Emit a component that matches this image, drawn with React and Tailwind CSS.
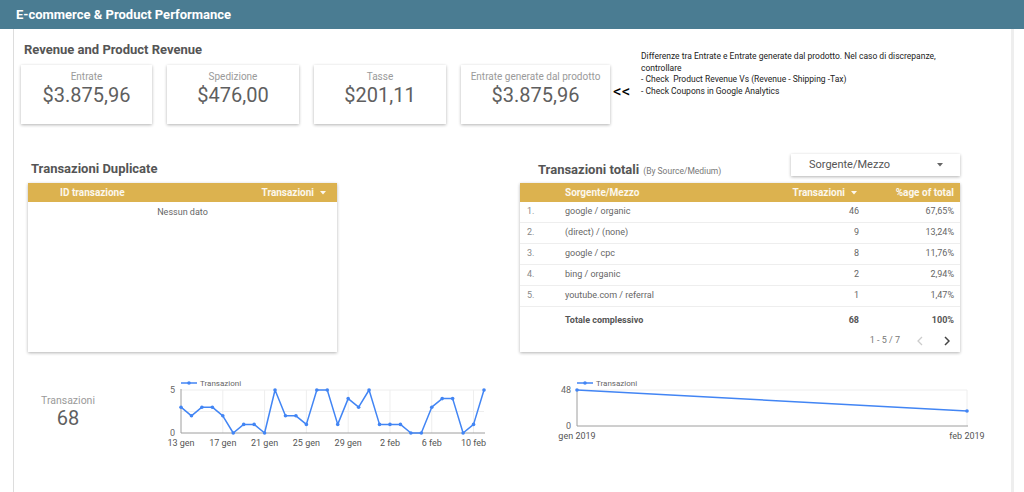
import React from 'react';

const CARDS = [
  { label: 'Entrate', value: '$3.875,96', w: 'w-[131px]' },
  { label: 'Spedizione', value: '$476,00', w: 'w-[132px]' },
  { label: 'Tasse', value: '$201,11', w: 'w-[132px]' },
  { label: 'Entrate generate dal prodotto', value: '$3.875,96', w: 'w-[149px]' },
];

const ROWS = [
  { src: 'google / organic', tx: 46, pct: '67,65%' },
  { src: '(direct) / (none)', tx: 9, pct: '13,24%' },
  { src: 'google / cpc', tx: 8, pct: '11,76%' },
  { src: 'bing / organic', tx: 2, pct: '2,94%' },
  { src: 'youtube.com / referral', tx: 1, pct: '1,47%' },
];

const DAILY = [3, 2, 3, 3, 2, 0, 1, 1, 0, 5, 2, 2, 1, 5, 5, 1, 4, 3, 5, 1, 1, 1, 0, 0, 3, 4, 4, 0, 1, 5];
const TICKS = ['13 gen', '17 gen', '21 gen', '25 gen', '29 gen', '2 feb', '6 feb', '10 feb'];

const BLUE = '#4285f4';
const FONT = 'Roboto, sans-serif';

const Caret = () => (
  <svg width="6" height="4" viewBox="0 0 6 4">
    <path d="M0 0 L6 0 L3 3.5 Z" fill="currentColor" />
  </svg>
);

const Scorecard = ({ label, value, w }) => (
  <div className={`${w} h-[59px] bg-white shadow-[0_1px_3px_rgba(0,0,0,0.3)] flex flex-col items-center pt-[6px]`}>
    <span className="text-[10px] leading-[12px] text-[#9a9a9a] whitespace-nowrap">{label}</span>
    <span className="text-[20px] leading-[24px] text-[#5f5f5f]">{value}</span>
  </div>
);

const DailyChart = () => {
  const x = (i) => 181 + i * (303 / 29);
  const y = (v) => 433 - v * 8.6;
  const pts = DAILY.map((v, i) => `${x(i)},${y(v)}`).join(' ');
  return (
    <svg width="335" height="80" viewBox="160 372 335 80" fontFamily={FONT}>
      <line x1="181" y1="390" x2="484" y2="390" stroke="#eeeeee" />
      <line x1="181" y1="411.5" x2="484" y2="411.5" stroke="#eeeeee" />
      {[4, 8, 12, 16, 20, 24, 28].map((i) => (
        <line key={i} x1={x(i)} y1="390" x2={x(i)} y2="433" stroke="#eeeeee" />
      ))}
      <line x1="181" y1="389" x2="181" y2="433" stroke="#9e9e9e" />
      <line x1="181" y1="433" x2="485" y2="433" stroke="#9e9e9e" />
      <text x="175" y="393" fontSize="9" fill="#666" textAnchor="end">5</text>
      <text x="175" y="436" fontSize="9" fill="#666" textAnchor="end">0</text>
      {TICKS.map((t, k) => (
        <text key={t} x={x(k * 4)} y="446" fontSize="9" fill="#555" textAnchor="middle">{t}</text>
      ))}
      <line x1="181" y1="383" x2="197" y2="383" stroke={BLUE} strokeWidth="1.5" />
      <circle cx="189" cy="383" r="1.8" fill={BLUE} />
      <text x="200" y="386" fontSize="8" fill="#666">Transazioni</text>
      <polyline points={pts} fill="none" stroke={BLUE} strokeWidth="1.5" strokeLinejoin="round" />
      {DAILY.map((v, i) => (
        <circle key={i} cx={x(i)} cy={y(v)} r="1.8" fill={BLUE} />
      ))}
    </svg>
  );
};

const MonthlyChart = () => (
  <svg width="445" height="80" viewBox="545 372 445 80" fontFamily={FONT}>
    <line x1="577" y1="390" x2="967" y2="390" stroke="#eeeeee" />
    <line x1="967" y1="390" x2="967" y2="426" stroke="#eeeeee" />
    <line x1="577" y1="389" x2="577" y2="426" stroke="#9e9e9e" />
    <line x1="577" y1="426" x2="968" y2="426" stroke="#9e9e9e" />
    <text x="571" y="393" fontSize="9" fill="#666" textAnchor="end">48</text>
    <text x="571" y="429" fontSize="9" fill="#666" textAnchor="end">0</text>
    <text x="577" y="439" fontSize="9" fill="#555" textAnchor="middle">gen 2019</text>
    <text x="967" y="439" fontSize="9" fill="#555" textAnchor="middle">feb 2019</text>
    <line x1="577" y1="383" x2="593" y2="383" stroke={BLUE} strokeWidth="1.5" />
    <circle cx="585" cy="383" r="1.8" fill={BLUE} />
    <text x="596" y="386" fontSize="8" fill="#666">Transazioni</text>
    <line x1="577" y1="390" x2="967" y2="411" stroke={BLUE} strokeWidth="1.5" />
    <circle cx="577" cy="390" r="1.8" fill={BLUE} />
    <circle cx="967" cy="411" r="1.8" fill={BLUE} />
  </svg>
);

export default function App() {
  return (
    <div className="w-[1024px] h-[492px] overflow-hidden bg-white flex flex-col font-['Roboto',sans-serif]">
      <header className="h-[29px] shrink-0 bg-[#4a7c92] flex items-center pl-[16px] text-white font-bold text-[13px]">
        E-commerce &amp; Product Performance
      </header>

      <div className="flex-1 flex">
        <div className="w-[13px]" />
        <main className="w-[1001px] border-l border-l-[#dddddd] border-r-[3px] border-r-[#eeeeee]">
          {/* revenue scorecards */}
          <div className="flex pt-[13px]">
            <div className="pl-[7px]">
              <h2 className="pl-[3px] text-[13px] leading-[16px] font-bold text-[#555]">Revenue and Product Revenue</h2>
              <div className="mt-[7px] flex gap-[15px]">
                {CARDS.map((c) => (
                  <Scorecard key={c.label} {...c} />
                ))}
              </div>
            </div>
            <span className="ml-[3px] mt-[39px] w-[28px] text-[17px] leading-[20px] text-black">&lt;&lt;</span>
            <div className="mt-[9px] text-[8.5px] leading-[11.6px] text-[#222] whitespace-nowrap">
              <div>Differenze tra Entrate e Entrate generate dal prodotto. Nel caso di discrepanze,</div>
              <div>controllare</div>
              <div>- Check&nbsp; Product Revenue Vs (Revenue - Shipping -Tax)</div>
              <div>- Check Coupons in Google Analytics</div>
            </div>
          </div>

          {/* tables */}
          <div className="mt-[30px] flex">
            <div className="ml-[14px] w-[309px]">
              <div className="h-[29px] flex items-center pl-[3px] text-[13px] font-bold text-[#555]">Transazioni Duplicate</div>
              <div className="h-[169px] bg-white shadow-[0_1px_3px_rgba(0,0,0,0.3)]">
                <div className="h-[19px] bg-[#dcb24f] flex items-center justify-between pl-[32px] pr-[11px] text-[10px] font-bold text-white/90">
                  <span>ID transazione</span>
                  <span className="flex items-center gap-[6px]">Transazioni <Caret /></span>
                </div>
                <div className="pt-[4px] text-center text-[9px] text-[#666]">Nessun dato</div>
              </div>
            </div>

            <div className="ml-[183px] w-[440px]">
              <div className="h-[29px] flex justify-between">
                <div className="pl-[18px] pt-[8px] flex items-baseline gap-[4px]">
                  <span className="text-[13px] leading-[16px] font-bold text-[#555]">Transazioni totali</span>
                  <span className="text-[8.5px] text-[#777]">(By Source/Medium)</span>
                </div>
                <div className="w-[169px] h-[22px] bg-white shadow-[0_1px_3px_rgba(0,0,0,0.3)] flex items-center justify-between pl-[18px] pr-[17px] text-[11px] text-[#555]">
                  <span>Sorgente/Mezzo</span>
                  <span className="text-[#666]"><Caret /></span>
                </div>
              </div>
              <div className="h-[169px] bg-white shadow-[0_1px_3px_rgba(0,0,0,0.3)] text-[9px]">
                <div className="h-[19px] bg-[#dcb24f] flex items-center text-[10px] font-bold text-white/90">
                  <span className="w-[45px]" />
                  <span className="flex-1">Sorgente/Mezzo</span>
                  <span className="w-[110px] flex items-center justify-end gap-[6px] pr-[3px]">Transazioni <Caret /></span>
                  <span className="w-[100px] text-right pr-[6px]">%age of total</span>
                </div>
                {ROWS.map((r, i) => (
                  <div key={r.src} className="h-[21px] border-b border-[#eeeeee] flex items-center text-[#666]">
                    <span className="w-[45px] pl-[7px] text-[#888]">{i + 1}.</span>
                    <span className="flex-1">{r.src}</span>
                    <span className="w-[110px] text-right pr-[1px]">{r.tx}</span>
                    <span className="w-[100px] text-right pr-[6px]">{r.pct}</span>
                  </div>
                ))}
                <div className="h-[27px] flex items-center font-bold text-[#555]">
                  <span className="w-[45px]" />
                  <span className="flex-1">Totale complessivo</span>
                  <span className="w-[110px] text-right pr-[1px]">68</span>
                  <span className="w-[100px] text-right pr-[6px]">100%</span>
                </div>
                <div className="h-[14px] flex items-center justify-end pr-[10px] text-[#777]">
                  <span>1 - 5 / 7</span>
                  <svg className="ml-[17px]" width="6" height="10" viewBox="0 0 6 10">
                    <polyline points="5,1 1,5 5,9" fill="none" stroke="#cccccc" strokeWidth="1.3" />
                  </svg>
                  <svg className="ml-[21px]" width="6" height="10" viewBox="0 0 6 10">
                    <polyline points="1,1 5,5 1,9" fill="none" stroke="#444" strokeWidth="1.5" />
                  </svg>
                </div>
              </div>
            </div>
          </div>

          {/* transactions over time */}
          <div className="mt-[20px] flex">
            <div className="w-[108px] flex flex-col items-center pt-[22px]">
              <span className="text-[10.5px] leading-[13px] text-[#9a9a9a]">Transazioni</span>
              <span className="text-[20px] leading-[22px] text-[#5f5f5f]">68</span>
            </div>
            <div className="ml-[38px]"><DailyChart /></div>
            <div className="ml-[50px]"><MonthlyChart /></div>
          </div>
        </main>
      </div>
    </div>
  );
}
